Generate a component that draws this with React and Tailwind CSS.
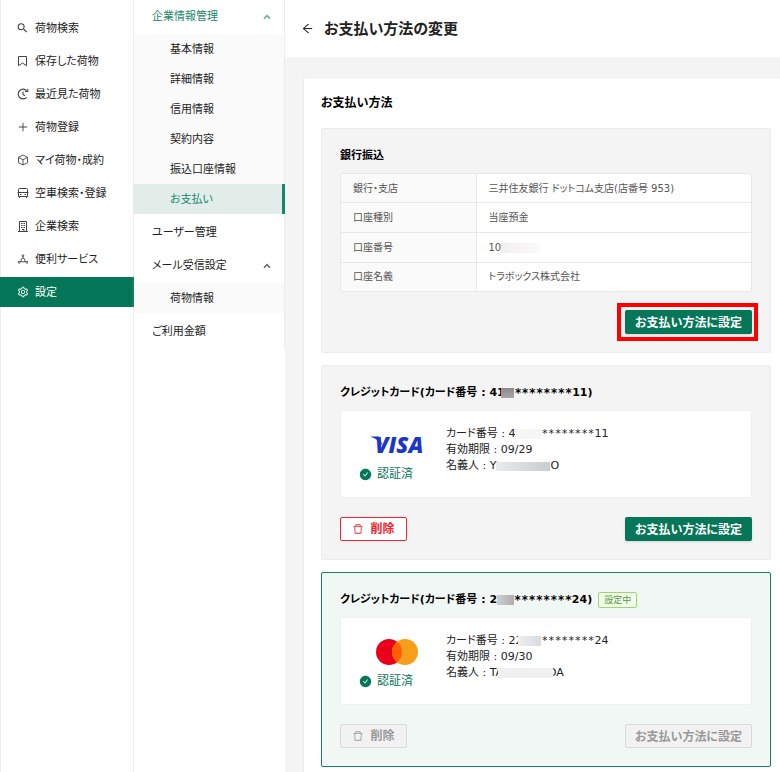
import React from "react";
import {
  AiOutlineArrowLeft,
  AiOutlineDelete,
  AiOutlineDeploymentUnit,
  AiOutlinePlus,
  AiOutlineSetting,
  AiFillCheckCircle,
} from "react-icons/ai";
import { MdSearch } from "react-icons/md";

function BookmarkIcon() {
  return (
    <svg viewBox="0 0 11 12" className="h-3 w-[11px]" fill="none" stroke="currentColor">
      <path d="M1.500 1.500h8v9.300L5.500 8l-4 2.800z" />
    </svg>
  );
}

function HistoryIcon() {
  return (
    <svg viewBox="0 0 12 12" className="size-3" fill="none" stroke="currentColor" strokeWidth="1.100">
      <path d="M9.700 9.300A4.900 4.900 0 1 1 9.700 2.700M8 3.500h2.800V1M6 3.500v3l2 1.300" />
    </svg>
  );
}

function CubeIcon() {
  return (
    <svg viewBox="0 0 12 12" className="size-3" fill="none" stroke="currentColor" strokeWidth="0.900" strokeLinejoin="round">
      <path d="M6 1 10.500 3.300v5.400L6 11 1.500 8.700V3.300zM1.500 3.300 6 5.700l4.500-2.400M6 5.700V11" />
    </svg>
  );
}

function VehicleIcon() {
  return (
    <svg viewBox="0 0 12 12" className="size-3" fill="none" stroke="currentColor">
      <path d="M1.500 9.500v-7q0-1 1-1h7q1 0 1 1v7zM0.500 5.500h11M2.500 9.500v1.500M9.500 9.500v1.500M3 7.500h1.500M7.500 7.500H9" />
    </svg>
  );
}

function BuildingIcon() {
  return (
    <svg viewBox="0 0 12 12" className="size-3" fill="none" stroke="currentColor">
      <path d="M2.500 11V1.500h7V11M1 11.500h10M4 3.500h1.500M6.500 3.500H8M4 5.500h1.500M6.500 5.500H8M4 7.500h1.500M6.500 7.500H8M5 9.500h2v2" />
    </svg>
  );
}

function Chevron() {
  return (
    <svg viewBox="0 0 8 6" className="h-[6px] w-2 opacity-70" fill="none" stroke="currentColor" strokeWidth="1.500">
      <path d="M1 4.800 4 1.600 7 4.800" />
    </svg>
  );
}

const mainMenu = [
  { label: "荷物検索", icon: <MdSearch size={14} /> },
  { label: "保存した荷物", icon: <BookmarkIcon /> },
  { label: "最近見た荷物", icon: <HistoryIcon /> },
  { label: "荷物登録", icon: <AiOutlinePlus size={12} /> },
  { label: "マイ荷物・成約", icon: <CubeIcon /> },
  { label: "空車検索・登録", icon: <VehicleIcon /> },
  { label: "企業検索", icon: <BuildingIcon /> },
  { label: "便利サービス", icon: <AiOutlineDeploymentUnit size={12} /> },
  { label: "設定", icon: <AiOutlineSetting size={12} />, active: true },
];

function MainMenu() {
  return (
    <nav className="flex w-[134px] shrink-0 flex-col gap-[3px] border-x border-[#ececec] pt-[13px]">
      {mainMenu.map((item) => (
        <a
          key={item.label}
          href="#"
          className={
            item.active
              ? "-mx-px flex h-[30px] items-center gap-[6px] border-r-2 border-[#17805f] bg-[#057657] pl-4 text-white"
              : "flex h-[30px] items-center gap-[6px] pl-[15px]"
          }
        >
          <span className={item.active ? "flex w-[13px] justify-center" : "flex w-[13px] justify-center text-[#444]"}>
            {item.icon}
          </span>
          <span className="pt-[2px]">{item.label}</span>
        </a>
      ))}
    </nav>
  );
}

function SubItem({ label, active }) {
  return (
    <a
      href="#"
      className={
        active
          ? "-mr-px flex h-[30px] items-center border-r-[3px] border-[#17876a] bg-[#e2edea] pt-[2px] pl-9 text-[#17876a]"
          : "flex h-[30px] items-center pt-[2px] pl-9"
      }
    >
      {label}
    </a>
  );
}

function GroupButton({ label, active }) {
  return (
    <button
      type="button"
      className={
        active
          ? "flex h-[30px] items-center justify-between pt-[2px] pr-[13px] pl-[18px] text-[#17876a]"
          : "flex h-[30px] items-center justify-between pt-[2px] pr-[13px] pl-[18px]"
      }
    >
      {label}
      <Chevron />
    </button>
  );
}

function SettingsMenu() {
  return (
    <div className="w-[151px] shrink-0">
      <nav className="flex flex-col gap-[3px] border-r border-[#ececec] pt-px pb-[3px]">
        <GroupButton label="企業情報管理" active />
        <div className="bg-[#fafafa]">
          <SubItem label="基本情報" />
          <SubItem label="詳細情報" />
          <SubItem label="信用情報" />
          <SubItem label="契約内容" />
          <SubItem label="振込口座情報" />
          <SubItem label="お支払い" active />
        </div>
        <a href="#" className="flex h-[30px] items-center pt-[2px] pl-[18px]">ユーザー管理</a>
        <GroupButton label="メール受信設定" />
        <div className="bg-[#fafafa]">
          <SubItem label="荷物情報" />
        </div>
        <a href="#" className="flex h-[30px] items-center pt-[2px] pl-[18px]">ご利用金額</a>
      </nav>
    </div>
  );
}

function SetButton({ disabled }) {
  return (
    <button
      type="button"
      disabled={disabled}
      className={
        disabled
          ? "h-6 w-[127px] rounded-[2px] border border-[#d9d9d9] bg-[#f2f2f2] pt-[2px] text-xs leading-none font-bold text-[#999]"
          : "h-6 w-[127px] rounded-[2px] bg-[#057657] pt-[2px] text-xs leading-none font-bold text-white shadow-sm"
      }
    >
      お支払い方法に設定
    </button>
  );
}

function DeleteButton({ disabled }) {
  return (
    <button
      type="button"
      disabled={disabled}
      className={
        disabled
          ? "flex h-6 w-[67px] items-center justify-center gap-[6px] rounded-[2px] border border-[#d9d9d9] bg-[#f2f2f2] text-xs leading-none font-bold text-[#999]"
          : "flex h-6 w-[67px] items-center justify-center gap-[6px] rounded-[2px] border border-[#f5222d] bg-white text-xs leading-none font-bold text-[#f5222d]"
      }
    >
      <AiOutlineDelete size={12} />
      削除
    </button>
  );
}

function VisaLogo() {
  return (
    <svg viewBox="-3 -8 60 36" className="h-9 w-[60px]" role="img" aria-label="VISA">
      <path d="M1 1.500h8l4 10Q8 4 1 2.100z" fill="#1c36c9" />
      <text
        x="5"
        y="18"
        fill="#1c36c9"
        fontFamily="'Open Sans', 'Noto Sans', sans-serif"
        fontSize="22"
        fontStyle="italic"
        fontWeight="800"
      >
        VISA
      </text>
    </svg>
  );
}

function MastercardLogo() {
  return (
    <svg viewBox="0 0 42 26" className="h-[26px] w-[42px]" role="img" aria-label="Mastercard">
      <circle cx="13" cy="13" r="13" fill="#eb001b" />
      <circle cx="29" cy="13" r="13" fill="#f79e1b" />
      <path d="M21 2.750a13 13 0 0 1 0 20.500a13 13 0 0 1 0-20.500z" fill="#ff5f00" />
    </svg>
  );
}

function Stars({ bold }) {
  return (
    <span
      className={
        bold
          ? "font-['DejaVu_Sans_Mono',monospace] text-xs leading-4"
          : "font-['DejaVu_Sans_Mono',monospace] leading-4"
      }
    >
      ********
    </span>
  );
}

function CreditCard({ heading, badge, selected, logo, lines }) {
  return (
    <section
      className={
        selected
          ? "rounded-[2px] border border-[#17805f] bg-[#f1f7f5] p-[18px]"
          : "rounded-[2px] border border-[#ececec] bg-[#f4f4f4] p-[18px]"
      }
    >
      <div className="flex h-[18px] items-center gap-[6px]">
        <h3 className="flex items-center font-bold whitespace-pre text-black">{heading}</h3>
        {badge}
      </div>
      <div className="mt-2 flex h-[88px] rounded-[2px] border border-[#f0f0f0] bg-white pt-[15px] pl-[18px]">
        <div className="w-[87px]">
          <div className="flex h-[38px] w-[76px] items-center justify-center">{logo}</div>
          <p className="flex h-5 items-center gap-[5px] text-xs text-[#057657]">
            <AiFillCheckCircle size={13} />
            認証済
          </p>
        </div>
        <div className="leading-4 whitespace-pre">{lines}</div>
      </div>
      <div className="mt-[19px] flex justify-between">
        <DeleteButton disabled={selected} />
        <SetButton disabled={selected} />
      </div>
    </section>
  );
}

const bankRows = [
  ["銀行・支店", "三井住友銀行 ドットコム支店(店番号 953)"],
  ["口座種別", "当座預金"],
  [
    "口座番号",
    <span key="number" className="flex items-center">
      10
      <span className="h-[10px] w-[39px] bg-linear-to-r from-[#f1eeee] to-[#fafafa]" />
    </span>,
  ],
  ["口座名義", "トラボックス株式会社"],
];

export default function App() {
  return (
    <div className="flex min-h-screen overflow-hidden bg-white font-['DejaVu_Sans','Noto_Sans_CJK_JP',sans-serif] text-[11px] leading-4 text-[#222] [font-feature-settings:'palt']">
      <MainMenu />
      <SettingsMenu />
      <main className="min-w-0 flex-1 bg-[#f4f4f4]">
        <header className="flex h-[57px] items-center gap-[10px] bg-white pl-4">
          <button type="button" aria-label="戻る">
            <AiOutlineArrowLeft size={13} />
          </button>
          <h1 className="text-[15px] font-bold">お支払い方法の変更</h1>
        </header>
        <div className="mt-5 ml-[18px] rounded-tl-[2px] border-t border-l border-[#ececec] bg-white pt-4 pr-[9px] pb-6 pl-[17px]">
          <h2 className="text-xs leading-[18px] font-bold text-black">お支払い方法</h2>
          <div className="mt-4 flex flex-col gap-3">
            <section className="rounded-[2px] border border-[#ececec] bg-[#f4f4f4] p-[18px]">
              <h3 className="leading-[18px] font-bold text-black">銀行振込</h3>
              <div className="mt-2 overflow-hidden rounded-[2px] border border-[#e8e8e8] bg-white">
                <table className="h-[117px] w-full border-collapse text-[10px] leading-4 text-[#555]">
                  <tbody>
                    {bankRows.map(([label, value]) => (
                      <tr key={label} className="border-b border-[#e8e8e8] last:border-b-0">
                        <th scope="row" className="w-[135px] border-r border-[#e8e8e8] bg-[#fafafa] px-3 pt-px text-left font-normal">
                          {label}
                        </th>
                        <td className="px-3 pt-px">{value}</td>
                      </tr>
                    ))}
                  </tbody>
                </table>
              </div>
              <div className="mt-[11px] -mr-[6px] -mb-[7px] flex justify-end">
                <div className="flex border-4 border-[#ff0000] py-[3px] pr-[2px] pl-1">
                  <SetButton />
                </div>
              </div>
            </section>

            <CreditCard
              heading={
                <>
                  クレジットカード(カード番号 : 41
                  <span className="relative -ml-1 h-[10px] w-[13px] bg-linear-to-b from-[#8d888c] to-[#aaa6a8]" />
                  <span className="-ml-[7px]">1</span>
                  <Stars bold />
                  11)
                </>
              }
              logo={<VisaLogo />}
              lines={
                <>
                  <p className="flex h-4 items-center">
                    カード番号 : 4
                    <span className="h-[10px] w-[26px] bg-[#f7f6f6]" />
                    <Stars />
                    11
                  </p>
                  <p>有効期限 : 09/29</p>
                  <p className="flex h-4 items-center">
                    名義人 : Y
                    <span className="h-[9px] w-[54px] bg-linear-to-r from-[#e9ebec] to-[#c9cdd0]" />
                    O
                  </p>
                </>
              }
            />

            <CreditCard
              selected
              heading={
                <>
                  クレジットカード(カード番号 : 2
                  <span className="h-[10px] w-[17px] bg-linear-to-r from-[#ccd0d0] to-[#b5abb1]" />
                  <Stars bold />
                  24)
                </>
              }
              badge={
                <span className="rounded-[2px] border border-[#95de64] bg-[#f6ffed] px-[5px] text-[9px] leading-[14px] text-[#4d9c3c]">
                  設定中
                </span>
              }
              logo={<MastercardLogo />}
              lines={
                <>
                  <p className="flex h-4 items-center">
                    カード番号 : 22
                    <span className="relative -ml-1 h-[10px] w-[23px] bg-linear-to-r from-[#eeeeee] to-[#d9dbe2]" />
                    <Stars />
                    24
                  </p>
                  <p>有効期限 : 09/30</p>
                  <p className="flex h-4 items-center">
                    名義人 : TA
                    <span className="relative -ml-[5px] h-[10px] w-[55px] bg-[#f0f0f0]" />
                    <span className="-ml-[5px]">DA</span>
                  </p>
                </>
              }
            />
          </div>
        </div>
      </main>
    </div>
  );
}
